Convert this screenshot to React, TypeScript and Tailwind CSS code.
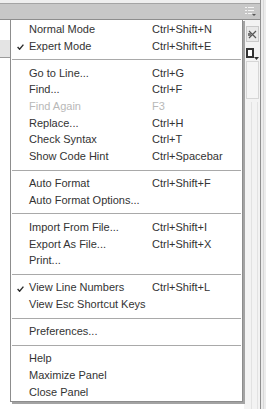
type Item = { label: string; shortcut?: string; checked?: boolean; disabled?: boolean } | "sep"

const items: Item[] = [
  { label: "Normal Mode", shortcut: "Ctrl+Shift+N" },
  { label: "Expert Mode", shortcut: "Ctrl+Shift+E", checked: true },
  "sep",
  { label: "Go to Line...", shortcut: "Ctrl+G" },
  { label: "Find...", shortcut: "Ctrl+F" },
  { label: "Find Again", shortcut: "F3", disabled: true },
  { label: "Replace...", shortcut: "Ctrl+H" },
  { label: "Check Syntax", shortcut: "Ctrl+T" },
  { label: "Show Code Hint", shortcut: "Ctrl+Spacebar" },
  "sep",
  { label: "Auto Format", shortcut: "Ctrl+Shift+F" },
  { label: "Auto Format Options..." },
  "sep",
  { label: "Import From File...", shortcut: "Ctrl+Shift+I" },
  { label: "Export As File...", shortcut: "Ctrl+Shift+X" },
  { label: "Print..." },
  "sep",
  { label: "View Line Numbers", shortcut: "Ctrl+Shift+L", checked: true },
  { label: "View Esc Shortcut Keys" },
  "sep",
  { label: "Preferences..." },
  "sep",
  { label: "Help" },
  { label: "Maximize Panel" },
  { label: "Close Panel" },
]

function Check() {
  return (
    <svg width="7" height="6" viewBox="0 0 7 6" className="block">
      <path d="M0.6 3.1 L2.6 5.2 L6.4 0.6" fill="none" stroke="#2a2a2a" strokeWidth="1.4" />
    </svg>
  )
}

function PanelMenuIcon() {
  return (
    <svg width="11" height="9" viewBox="0 0 11 9" className="block">
      <rect x="0" y="0" width="2" height="1" fill="#f4f4f4" />
      <rect x="3" y="0" width="6" height="1" fill="#f4f4f4" />
      <rect x="0" y="3" width="2" height="1" fill="#f4f4f4" />
      <rect x="3" y="3" width="6" height="1" fill="#f4f4f4" />
      <rect x="0" y="6" width="2" height="1" fill="#f4f4f4" />
      <rect x="3" y="6" width="4" height="1" fill="#f4f4f4" />
      <path d="M7 7 H11 L9 9 Z" fill="#555" />
    </svg>
  )
}

function ContextMenu() {
  return (
    <div className="absolute left-[10px] top-[19px] flex h-[383px] w-[233px] flex-col border border-[#8d8d8d] bg-white pt-[1px] shadow-[2px_2px_0_#a3a3a3]">
      {items.map((item, i) =>
        item === "sep" ? (
          <div key={i} className="flex h-[10.4px] items-center pl-[1px] pr-[1px]">
            <div className="h-px w-full bg-[#a9a9a9]" />
          </div>
        ) : (
          <div
            key={i}
            className={`relative grid h-[16.7px] grid-cols-[123px_1fr] items-center pl-[18px] ${
              item.disabled ? "text-[#b8b8b8]" : "text-[#333333]"
            }`}
          >
            {item.checked && (
              <span className="absolute left-[6px] top-[6px]">
                <Check />
              </span>
            )}
            <span className="whitespace-nowrap">{item.label}</span>
            <span className="whitespace-nowrap">{item.shortcut}</span>
          </div>
        )
      )}
    </div>
  )
}

export default function App() {
  return (
    <div className="relative h-[409px] w-[267px] overflow-hidden bg-[#f7f7f7] font-['Liberation_Sans',Arial,sans-serif] text-[11px] leading-none">
      <div className="flex h-full">
        <div className="flex w-[260px] flex-col">
          <div className="h-[4px] border-b border-[#a4a4a4] bg-[#eeeeee]" />
          <div className="flex h-[16px] items-center justify-end border-b border-[#8e8e8e] bg-[#c7c7c7] pr-[4px]">
            <PanelMenuIcon />
          </div>
          <div className="flex flex-1">
            <div className="flex flex-1 flex-col">
              <div className="h-[20px] bg-white" />
              <div className="h-[18px] border-b border-[#9a9a9a] bg-[#e4e4e4]" />
              <div className="flex-1 bg-white" />
            </div>
            <div className="flex w-[16px] flex-col items-center gap-[3px] bg-[#f3f3f3] pt-[6px]">
              <div className="flex h-[16px] w-[13px] items-center justify-center border border-[#c9c9c9] bg-[#e9e9e9]">
                <svg width="9" height="9" viewBox="0 0 9 9" className="block">
                  <path d="M1 1 L8 8 M8 1 L1 8" stroke="#555" strokeWidth="1.2" />
                  <rect x="0" y="3" width="3" height="3" fill="#777" />
                </svg>
              </div>
              <div className="flex h-[13px] w-[13px] items-end justify-start">
                <div className="h-[10px] w-[8px] border-2 border-[#333] bg-white" />
                <svg width="5" height="3" viewBox="0 0 5 3" className="mb-[-2px] block">
                  <path d="M0 0 H5 L2.5 3 Z" fill="#333" />
                </svg>
              </div>
              <div className="h-[38px] w-[13px] border border-[#d6d6d6] bg-[#f5f5f5]" />
              <div className="flex flex-1 gap-[5px] pl-[4px]">
                <div className="w-px bg-[#e2e2e2]" />
                <div className="w-px bg-[#e2e2e2]" />
              </div>
            </div>
          </div>
        </div>
        <div className="w-px bg-[#8f8f8f]" />
        <div className="flex flex-1 gap-[2px] bg-[#ececec] pl-[2px]">
          <div className="w-px bg-[#d8d8d8]" />
          <div className="w-px bg-white" />
        </div>
      </div>
      <ContextMenu />
    </div>
  )
}
